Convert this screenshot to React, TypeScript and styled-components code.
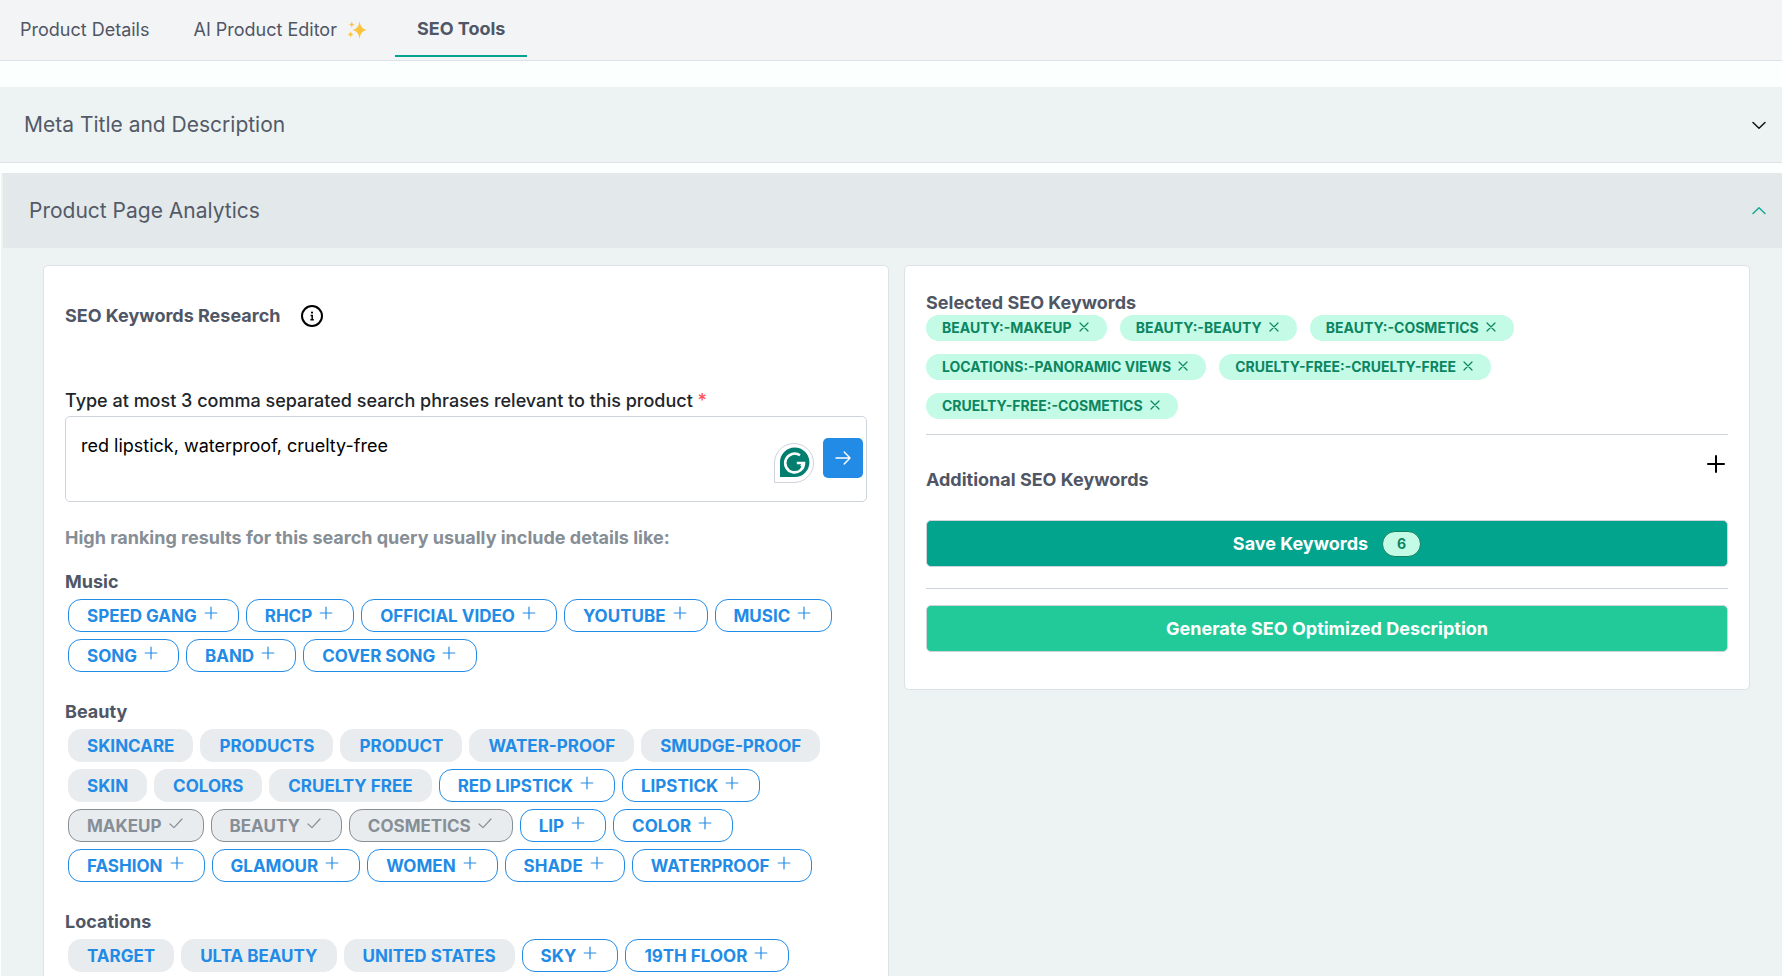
import React, { useId } from "react";
import styled, { createGlobalStyle } from "styled-components";

const GlobalStyle = createGlobalStyle`
  *, *::before, *::after { box-sizing: border-box; }
  body {
    margin: 0;
    background: #fbfffe;
    color: #4f5665;
    font-family: Inter, "Liberation Sans", sans-serif;
    font-size: 18px;
    line-height: 24px;
  }
  button, textarea { font: inherit; }
  button { cursor: pointer; }
  h2, h3, p { margin: 0; font-size: inherit; }
`;

const Page = styled.div`
  height: 100vh;
  overflow: hidden;
`;

const TabBar = styled.nav`
  display: flex;
  align-items: flex-start;
  height: 61px;
  background: #f3f4f6;
  border-bottom: 1px solid #dee2e8;
`;

const Tab = styled.button<{ $active?: boolean }>`
  display: flex;
  align-items: center;
  gap: 10px;
  height: ${(p) => (p.$active ? 57 : 60)}px;
  padding: ${(p) => (p.$active ? "2px 22px 0" : "0 24px 0 20px")};
  margin-left: ${(p) => (p.$active ? 4 : 0)}px;
  border: 0;
  border-bottom: ${(p) => (p.$active ? "2px solid #02a48d" : "0")};
  background: none;
  color: #4f5665;
  font-weight: ${(p) => (p.$active ? 700 : 400)};
`;

const AccordionItem = styled.section<{ $open?: boolean }>`
  margin-top: ${(p) => (p.$open ? 10 : 26)}px;
  margin-left: ${(p) => (p.$open ? 1 : 0)}px;
  background: #edf3f3;
  border-bottom: 1px solid #dee2e8;
`;

const AccordionHeader = styled.button<{ $open?: boolean }>`
  display: flex;
  align-items: center;
  justify-content: space-between;
  width: ${(p) => (p.$open ? "calc(100% - 2px)" : "100%")};
  height: 75px;
  margin-left: ${(p) => (p.$open ? 2 : 0)}px;
  padding: 0 13px 0 ${(p) => (p.$open ? 26 : 24)}px;
  border: 0;
  background: ${(p) => (p.$open ? "#e3e8ea" : "transparent")};
  color: ${(p) => (p.$open ? "#14ab96" : "#111")};
`;

const AccordionTitle = styled.span`
  color: #535a68;
  font-size: 21px;
`;

const Columns = styled.div`
  display: grid;
  grid-template-columns: 1fr 1fr;
  align-items: start;
  gap: 15px;
  padding: 17px 32px 32px 42px;
`;

const Card = styled.div`
  background: #fff;
  border: 1px solid #dde2e6;
  border-radius: 5px;
`;

const ResearchCard = styled(Card)`
  padding: 34px 21px;
`;

const SelectionCard = styled(Card)`
  padding: 25px 21px 37px;
`;

const TitleRow = styled.div`
  display: flex;
  align-items: center;
  gap: 20px;
  height: 32px;
`;

const Heading = styled.h2`
  font-weight: 700;
`;

const IconButton = styled.button`
  display: flex;
  padding: 0;
  border: 0;
  background: none;
  color: #000;
`;

const FieldLabel = styled.label`
  display: block;
  margin-top: 57px;
  color: #212529;
  font-weight: 500;
`;

const Required = styled.span`
  color: #fa5252;
`;

const Field = styled.div`
  position: relative;
  margin-top: 3px;
`;

const PhraseInput = styled.textarea`
  display: block;
  width: 100%;
  height: 86px;
  padding: 17px 110px 17px 15px;
  border: 1px solid #ced4da;
  border-radius: 5px;
  background: #fff;
  color: #000;
  outline: 0;
  resize: none;
`;

const FieldActions = styled.div`
  position: absolute;
  top: 22px;
  right: 4px;
  display: flex;
  gap: 9px;
`;

const SubmitButton = styled.button`
  display: flex;
  align-items: center;
  justify-content: center;
  width: 40px;
  height: 40px;
  padding: 0;
  border: 0;
  border-radius: 5px;
  background: #228be6;
  color: #fff;
`;

const AssistantBadge = styled.span`
  display: flex;
  margin-top: 5px;
`;

const Hint = styled.p`
  margin-top: 24px;
  margin-bottom: 20px;
  color: #868e96;
  font-weight: 700;
`;

const Group = styled.section`
  margin-bottom: 28px;
`;

const GroupTitle = styled.h3`
  font-weight: 700;
`;

const ChipList = styled.div`
  display: flex;
  flex-wrap: wrap;
  gap: 7px;
  margin-top: 5px;
  padding: 0 3px;
`;

type ChipKind = "add" | "plain" | "picked";

const chipBorder = { add: "#228be6", plain: "#e9ecef", picked: "#868e96" };

const Chip = styled.button<{ $kind: ChipKind }>`
  display: flex;
  align-items: center;
  gap: 5px;
  height: 33px;
  padding: 0 18px;
  border: 1px solid ${(p) => chipBorder[p.$kind]};
  border-radius: 13px;
  background: ${(p) => (p.$kind === "add" ? "#fff" : "#e9ecef")};
  color: ${(p) => (p.$kind === "picked" ? "#868e96" : "#228be6")};
  font-size: 17px;
  font-weight: 700;
  text-transform: uppercase;
  white-space: nowrap;

  svg { margin-bottom: 5px; }
`;

const KeywordList = styled.div`
  display: flex;
  flex-wrap: wrap;
  gap: 13px;
  max-width: 660px;
`;

const Keyword = styled.button`
  display: flex;
  align-items: center;
  gap: 5px;
  height: 26px;
  padding: 0 16px;
  border: 0;
  border-radius: 13px;
  background: #c4fbe7;
  color: #0c8560;
  font-size: 14px;
  font-weight: 700;
  text-transform: uppercase;
  white-space: nowrap;

  svg { margin-bottom: 3px; }
`;

const Divider = styled.hr`
  height: 1px;
  margin: 15px 0 0;
  border: 0;
  background: #ced4da;
`;

const AdditionalRow = styled.div`
  display: flex;
  align-items: flex-start;
  justify-content: space-between;
  padding: 17px 0 28px;

  h2 { margin-top: 16px; }
`;

const ActionButton = styled.button<{ $tone: string }>`
  display: flex;
  align-items: center;
  justify-content: center;
  gap: 14px;
  width: 100%;
  height: 47px;
  border: 1px solid #ced4da;
  border-radius: 5px;
  background: ${(p) => p.$tone};
  color: #fff;
  font-weight: 700;
`;

const SaveGroup = styled.div`
  display: flex;
  flex-direction: column;

  hr { margin: 21px 0 16px; }
`;

const Count = styled.span`
  display: flex;
  align-items: center;
  justify-content: center;
  width: 39px;
  height: 26px;
  border: 1px solid #0c8560;
  border-radius: 13px;
  background: #c4fbe7;
  color: #0c8560;
  font-size: 14px;
`;

const Line = ({ d, size, view = 18, width = 1 }: { d: string; size: number; view?: number; width?: number }) => (
  <svg
    width={size}
    height={size}
    viewBox={`0 0 ${view} ${view}`}
    fill="none"
    stroke="currentColor"
    strokeWidth={width}
    strokeLinecap="round"
    strokeLinejoin="round"
    aria-hidden="true"
  >
    <path d={d} />
  </svg>
);

const PlusIcon = () => <Line size={18} width={1.2} d="M9 3.2V14.8M3.2 9H14.8" />;
const CheckIcon = () => <Line size={18} width={1.2} d="M3 10L7 13.6L15 5" />;
const CloseIcon = () => <Line size={14} view={14} width={1.2} d="M3 3L11 11M11 3L3 11" />;
const ChevronDown = () => <Line size={20} view={20} width={1.5} d="M4 7.5L10 13.3L16 7.5" />;
const ChevronUp = () => <Line size={20} view={20} width={1.5} d="M4 12.5L10 6.7L16 12.5" />;
const ArrowIcon = () => <Line size={20} view={20} width={1.4} d="M3 10H17M11.2 4L17 10L11.2 16" />;
const AddIcon = () => <Line size={24} view={24} width={2} d="M12 4V20M4 12H20" />;

const InfoIcon = () => (
  <svg width="24" height="24" viewBox="0 0 24 24" fill="none" stroke="#000" aria-hidden="true">
    <circle cx="12" cy="12" r="10" strokeWidth="2" />
    <circle cx="12" cy="8.6" r="1.1" fill="#000" stroke="none" />
    <path d="M10.6 11.4H12.2V15.6M10.4 15.8H13.8" strokeWidth="1.5" />
  </svg>
);

const SparklesIcon = () => (
  <svg width="20" height="20" viewBox="0 0 20 20" fill="#fcc43e" aria-hidden="true">
    <path d="M12.6 1C13.4 6.2 14.9 8.6 19.8 10C14.9 11.4 13.4 13.8 12.6 19C11.8 13.8 10.3 11.4 5.4 10C10.3 8.6 11.8 6.2 12.6 1Z" />
    <path d="M4.7 1.2C5 3.4 5.7 4.1 7.8 4.6C5.7 5.1 5 5.8 4.7 8C4.4 5.8 3.7 5.1 1.6 4.6C3.7 4.1 4.4 3.4 4.7 1.2Z" />
    <path d="M3.6 11C3.9 13.2 4.6 13.9 6.7 14.4C4.6 14.9 3.9 15.6 3.6 17.8C3.3 15.6 2.6 14.9 .5 14.4C2.6 13.9 3.3 13.2 3.6 11Z" />
  </svg>
);

const AssistantIcon = () => (
  <svg width="40" height="40" viewBox="0 0 40 40" fill="none" aria-hidden="true">
    <path d="M.5 39.5V20A19.5 19.5 0 1 1 20 39.5Z" fill="#fff" stroke="#cfd1de" />
    <path d="M6 34V19.5A14.7 14.7 0 1 1 20.7 34Z" fill="#027e6f" />
    <path d="M26 12.3A9.4 9.4 0 1 0 30 20H22.8M30 20L27.2 23.6" stroke="#fff" strokeWidth="2.6" />
  </svg>
);

const groups: { title: string; rows: [string, ChipKind][] }[] = [
  {
    title: "Music",
    rows: [
      ["Speed Gang", "add"],
      ["RHCP", "add"],
      ["Official Video", "add"],
      ["YouTube", "add"],
      ["Music", "add"],
      ["Song", "add"],
      ["Band", "add"],
      ["Cover Song", "add"],
    ],
  },
  {
    title: "Beauty",
    rows: [
      ["Skincare", "plain"],
      ["Products", "plain"],
      ["Product", "plain"],
      ["Water-proof", "plain"],
      ["Smudge-proof", "plain"],
      ["Skin", "plain"],
      ["Colors", "plain"],
      ["Cruelty Free", "plain"],
      ["Red Lipstick", "add"],
      ["Lipstick", "add"],
      ["Makeup", "picked"],
      ["Beauty", "picked"],
      ["Cosmetics", "picked"],
      ["Lip", "add"],
      ["Color", "add"],
      ["Fashion", "add"],
      ["Glamour", "add"],
      ["Women", "add"],
      ["Shade", "add"],
      ["Waterproof", "add"],
    ],
  },
  {
    title: "Locations",
    rows: [
      ["Target", "plain"],
      ["Ulta Beauty", "plain"],
      ["United States", "plain"],
      ["Sky", "add"],
      ["19th Floor", "add"],
    ],
  },
];

const selected = [
  "Beauty:-Makeup",
  "Beauty:-Beauty",
  "Beauty:-Cosmetics",
  "Locations:-Panoramic Views",
  "Cruelty-free:-Cruelty-free",
  "Cruelty-free:-Cosmetics",
];

export default function App() {
  const phrasesId = useId();
  return (
    <Page>
      <GlobalStyle />
      <TabBar>
        <Tab>Product Details</Tab>
        <Tab>
          AI Product Editor <SparklesIcon />
        </Tab>
        <Tab $active>SEO Tools</Tab>
      </TabBar>

      <AccordionItem>
        <AccordionHeader aria-expanded={false}>
          <AccordionTitle>Meta Title and Description</AccordionTitle>
          <ChevronDown />
        </AccordionHeader>
      </AccordionItem>

      <AccordionItem $open>
        <AccordionHeader $open aria-expanded>
          <AccordionTitle>Product Page Analytics</AccordionTitle>
          <ChevronUp />
        </AccordionHeader>
        <Columns>
          <ResearchCard>
            <TitleRow>
              <Heading>SEO Keywords Research</Heading>
              <IconButton aria-label="About keyword research">
                <InfoIcon />
              </IconButton>
            </TitleRow>
            <FieldLabel htmlFor={phrasesId}>
              Type at most 3 comma separated search phrases relevant to this product <Required>*</Required>
            </FieldLabel>
            <Field>
              <PhraseInput id={phrasesId} spellCheck={false} defaultValue="red lipstick, waterproof, cruelty-free" />
              <FieldActions>
                <AssistantBadge>
                  <AssistantIcon />
                </AssistantBadge>
                <SubmitButton aria-label="Search">
                  <ArrowIcon />
                </SubmitButton>
              </FieldActions>
            </Field>
            <Hint>High ranking results for this search query usually include details like:</Hint>
            {groups.map((group) => (
              <Group key={group.title}>
                <GroupTitle>{group.title}</GroupTitle>
                <ChipList>
                  {group.rows.map(([name, kind]) => (
                    <Chip key={name} $kind={kind}>
                      {name}
                      {kind === "add" && <PlusIcon />}
                      {kind === "picked" && <CheckIcon />}
                    </Chip>
                  ))}
                </ChipList>
              </Group>
            ))}
          </ResearchCard>

          <SelectionCard>
            <Heading>Selected SEO Keywords</Heading>
            <KeywordList>
              {selected.map((name) => (
                <Keyword key={name}>
                  {name}
                  <CloseIcon />
                </Keyword>
              ))}
            </KeywordList>
            <Divider />
            <AdditionalRow>
              <Heading>Additional SEO Keywords</Heading>
              <IconButton aria-label="Add keyword">
                <AddIcon />
              </IconButton>
            </AdditionalRow>
            <SaveGroup>
              <ActionButton $tone="#02a48d">
                Save Keywords <Count>6</Count>
              </ActionButton>
              <Divider />
              <ActionButton $tone="#22ca99">Generate SEO Optimized Description</ActionButton>
            </SaveGroup>
          </SelectionCard>
        </Columns>
      </AccordionItem>
    </Page>
  );
}
